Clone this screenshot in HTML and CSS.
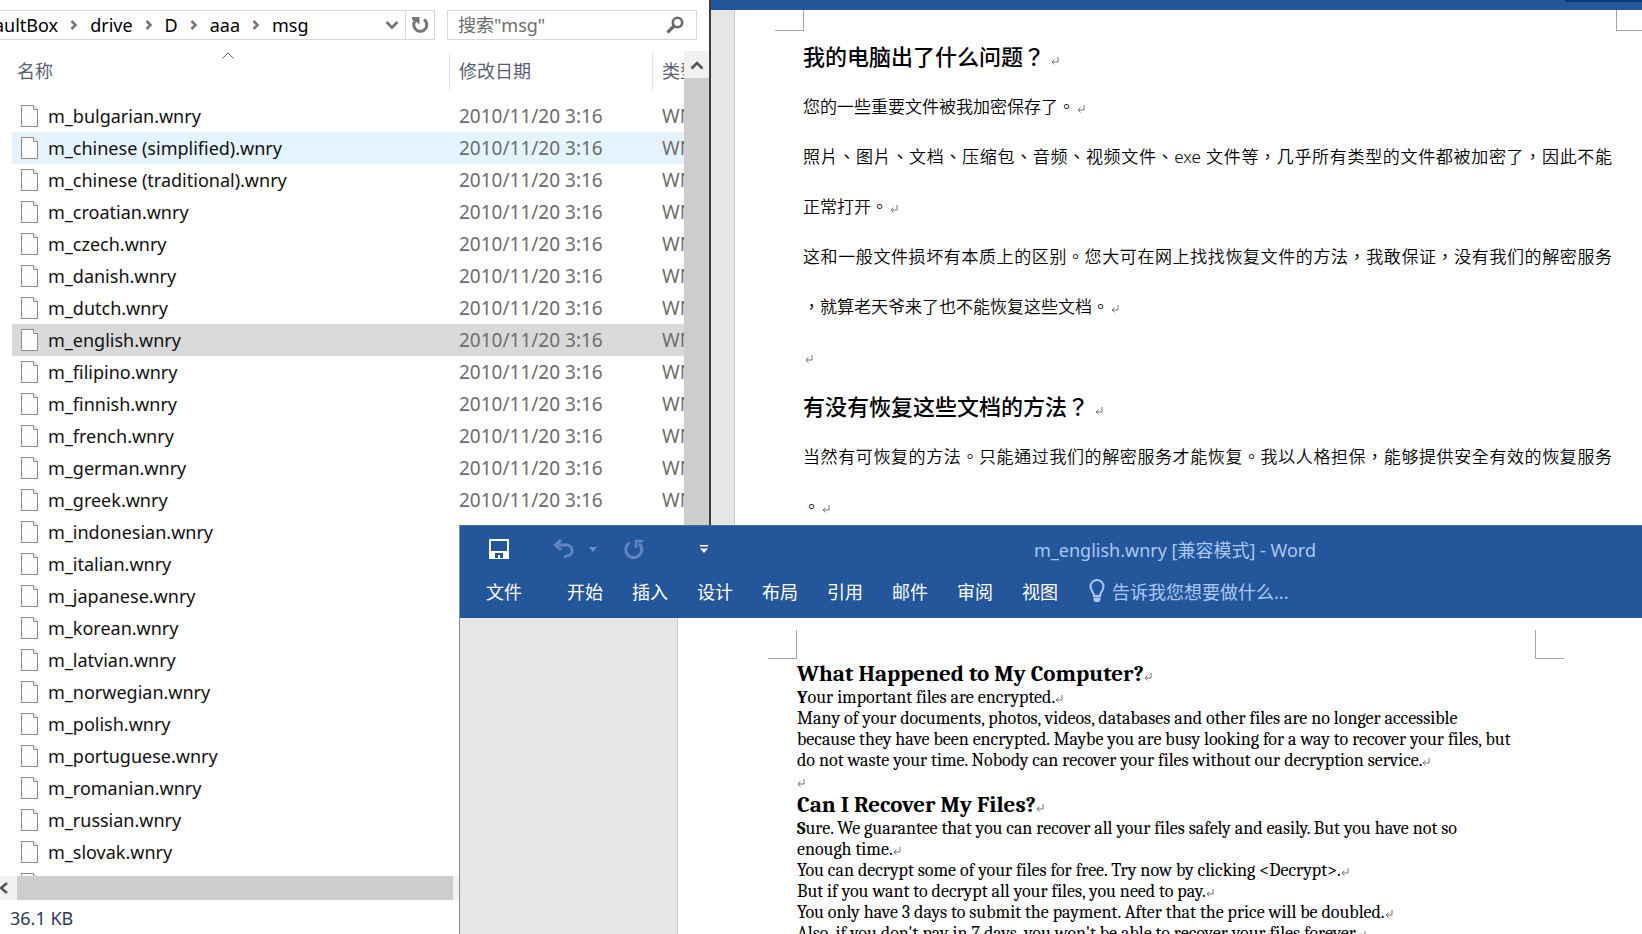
FILE: index.html
```html
<!DOCTYPE html>
<html lang="zh-CN">
<head>
<meta charset="utf-8">
<title>msg</title>
<link rel="stylesheet" href="styles.css">
</head>
<body>
<svg class="defs" aria-hidden="true">
  <symbol id="ret" viewBox="0 0 8 8"><path d="M7 0v5H1M3.500 2.500L1 5l2.500 2.500" fill="none" stroke="#777" stroke-width="1"/></symbol>
  <symbol id="file" viewBox="0 0 18 22"><path d="M.5.5h12l4 4v17H.5z" fill="#fdfcfd" stroke="#8b8b8b"/><path d="M12.500.5v4h4" fill="#fff" stroke="#8b8b8b"/></symbol>
  <symbol id="chev" viewBox="0 0 8 10"><path d="M1.500 1l4 4-4 4" fill="none" stroke="#777" stroke-width="2.600"/></symbol>
</svg>
<main class="desktop">

<section class="explorer" aria-label="msg">
  <div class="toolbar">
    <nav class="address">
      <button class="crumb">aultBox</button><svg class="chev"><use href="#chev"/></svg>
      <button class="crumb">drive</button><svg class="chev"><use href="#chev"/></svg>
      <button class="crumb">D</button><svg class="chev"><use href="#chev"/></svg>
      <button class="crumb">aaa</button><svg class="chev"><use href="#chev"/></svg>
      <button class="crumb">msg</button>
      <button class="drop" aria-label="展开"><svg width="14" height="10" viewBox="0 0 14 10"><path d="M1.500 2L7 7.500 12.500 2" fill="none" stroke="#777" stroke-width="2.800"/></svg></button>
      <button class="refresh" aria-label="刷新"><svg width="18" height="18" viewBox="0 0 18 18"><path d="M13 3.500A6.500 6.500 0 1 1 4 5" fill="none" stroke="#777" stroke-width="3"/><path d="M1 1h7.500v7.500L5.500 6 1 3.500z" fill="#777"/></svg></button>
    </nav>
    <label class="search">
      <input type="text" aria-label="搜索" placeholder='搜索"msg"'>
      <svg width="18" height="18" viewBox="0 0 18 18"><circle cx="11.500" cy="6.500" r="4.700" fill="none" stroke="#6b6b6b" stroke-width="2.600"/><path d="M8 10l-6.500 6.500" stroke="#6b6b6b" stroke-width="3.200"/></svg>
    </label>
  </div>
  <div class="content">
    <div class="list">
      <table>
        <colgroup><col class="c-name"><col class="c-date"><col class="c-type"></colgroup>
        <thead><tr>
          <th class="name"><div>名称</div><svg class="sort" width="12" height="7" viewBox="0 0 12 7"><path d="M.5 6.500L6 1l5.500 5.500" fill="none" stroke="#666"/></svg></th>
          <th><div>修改日期</div></th><th><div>类型</div></th>
        </tr></thead>
        <tbody id="files">
          <tr><td><span><svg><use href="#file"/></svg>m_bulgarian.wnry</span></td><td>2010/11/20 3:16</td><td>WNRY</td></tr>
          <tr class="hover"><td><span><svg><use href="#file"/></svg>m_chinese (simplified).wnry</span></td><td>2010/11/20 3:16</td><td>WNRY</td></tr>
          <tr><td><span><svg><use href="#file"/></svg>m_chinese (traditional).wnry</span></td><td>2010/11/20 3:16</td><td>WNRY</td></tr>
          <tr><td><span><svg><use href="#file"/></svg>m_croatian.wnry</span></td><td>2010/11/20 3:16</td><td>WNRY</td></tr>
          <tr><td><span><svg><use href="#file"/></svg>m_czech.wnry</span></td><td>2010/11/20 3:16</td><td>WNRY</td></tr>
          <tr><td><span><svg><use href="#file"/></svg>m_danish.wnry</span></td><td>2010/11/20 3:16</td><td>WNRY</td></tr>
          <tr><td><span><svg><use href="#file"/></svg>m_dutch.wnry</span></td><td>2010/11/20 3:16</td><td>WNRY</td></tr>
          <tr class="selected"><td><span><svg><use href="#file"/></svg>m_english.wnry</span></td><td>2010/11/20 3:16</td><td>WNRY</td></tr>
          <tr><td><span><svg><use href="#file"/></svg>m_filipino.wnry</span></td><td>2010/11/20 3:16</td><td>WNRY</td></tr>
          <tr><td><span><svg><use href="#file"/></svg>m_finnish.wnry</span></td><td>2010/11/20 3:16</td><td>WNRY</td></tr>
          <tr><td><span><svg><use href="#file"/></svg>m_french.wnry</span></td><td>2010/11/20 3:16</td><td>WNRY</td></tr>
          <tr><td><span><svg><use href="#file"/></svg>m_german.wnry</span></td><td>2010/11/20 3:16</td><td>WNRY</td></tr>
          <tr><td><span><svg><use href="#file"/></svg>m_greek.wnry</span></td><td>2010/11/20 3:16</td><td>WNRY</td></tr>
          <tr><td><span><svg><use href="#file"/></svg>m_indonesian.wnry</span></td><td></td><td></td></tr>
          <tr><td><span><svg><use href="#file"/></svg>m_italian.wnry</span></td><td></td><td></td></tr>
          <tr><td><span><svg><use href="#file"/></svg>m_japanese.wnry</span></td><td></td><td></td></tr>
          <tr><td><span><svg><use href="#file"/></svg>m_korean.wnry</span></td><td></td><td></td></tr>
          <tr><td><span><svg><use href="#file"/></svg>m_latvian.wnry</span></td><td></td><td></td></tr>
          <tr><td><span><svg><use href="#file"/></svg>m_norwegian.wnry</span></td><td></td><td></td></tr>
          <tr><td><span><svg><use href="#file"/></svg>m_polish.wnry</span></td><td></td><td></td></tr>
          <tr><td><span><svg><use href="#file"/></svg>m_portuguese.wnry</span></td><td></td><td></td></tr>
          <tr><td><span><svg><use href="#file"/></svg>m_romanian.wnry</span></td><td></td><td></td></tr>
          <tr><td><span><svg><use href="#file"/></svg>m_russian.wnry</span></td><td></td><td></td></tr>
          <tr><td><span><svg><use href="#file"/></svg>m_slovak.wnry</span></td><td></td><td></td></tr>
          <tr><td><span><svg><use href="#file"/></svg></span></td><td></td><td></td></tr>
        </tbody>
      </table>
    </div>
    <div class="vscroll"><button aria-label="向上"><svg width="14" height="10" viewBox="0 0 14 10"><path d="M1.500 8.500L7 3l5.500 5.500" fill="none" stroke="#555" stroke-width="2.600"/></svg></button><div class="thumb"></div></div>
  </div>
  <div class="hscroll"><button aria-label="向左"><svg width="9" height="12" viewBox="0 0 9 12"><path d="M7 1L1 6l6 5" fill="none" stroke="#555" stroke-width="2.600"/></svg></button><div class="thumb"></div></div>
  <footer class="status">36.1 KB</footer>
</section>

<section class="word word-cn" lang="zh-TW" aria-label="Word">
  <div class="titlestrip"><i></i></div>
  <div class="workspace">
    <article class="page">
      <div class="corners"><i class="cl"></i><i class="cr"></i></div>
      <h2>我的电脑出了什么问题？<svg class="ret"><use href="#ret"/></svg></h2>
      <p>您的一些重要文件被我加密保存了。<svg class="ret"><use href="#ret"/></svg></p>
      <p class="full">照片、图片、文档、压缩包、音频、视频文件、exe 文件等，几乎所有类型的文件都被加密了，因此不能</p>
      <p>正常打开。<svg class="ret"><use href="#ret"/></svg></p>
      <p class="full">这和一般文件损坏有本质上的区别。您大可在网上找找恢复文件的方法，我敢保证，没有我们的解密服务</p>
      <p>，就算老天爷来了也不能恢复这些文档。<svg class="ret"><use href="#ret"/></svg></p>
      <p><svg class="ret"><use href="#ret"/></svg></p>
      <h2>有没有恢复这些文档的方法？<svg class="ret"><use href="#ret"/></svg></h2>
      <p class="full">当然有可恢复的方法。只能通过我们的解密服务才能恢复。我以人格担保，能够提供安全有效的恢复服务</p>
      <p>。<svg class="ret"><use href="#ret"/></svg></p>
    </article>
  </div>
</section>

<section class="word word-en" aria-label="m_english.wnry - Word">
  <header class="ribbon">
    <div class="titlebar">
      <div class="quick">
        <button class="save" aria-label="保存"><svg width="20" height="20" viewBox="0 0 20 20"><path d="M1 1h18v18H1z" fill="none" stroke="#fff" stroke-width="2"/><path d="M1 12h18v7H1z" fill="#fff"/><path d="M6 14h8v5h-3v-3H9v3H6z" fill="#24569b"/></svg></button>
        <button class="undo" aria-label="撤消"><svg width="22" height="20" viewBox="0 0 22 20"><path d="M3 6h10a5.500 5.500 0 0 1 1 11l-3 1M8 1L2.500 6 8 11" fill="none" stroke="#5f84bf" stroke-width="3"/></svg></button>
        <button class="mini" aria-label="撤消选项"><svg width="8" height="5" viewBox="0 0 8 5"><path d="M0 0h8L4 5z" fill="#6f90c6"/></svg></button>
        <button class="redo" aria-label="重复"><svg width="20" height="20" viewBox="0 0 20 20"><path d="M6 3.500A8 8 0 1 0 15 4.500" fill="none" stroke="#5f84bf" stroke-width="3"/><path d="M19 2h-7v7" fill="none" stroke="#5f84bf" stroke-width="2.600"/></svg></button>
        <button class="custom" aria-label="自定义"><svg width="8" height="8" viewBox="0 0 8 8"><path d="M0 0h8v1.500H0zM0 3.500h8L4 8z" fill="#fff"/></svg></button>
      </div>
      <div class="title">m_english.wnry [兼容模式] - Word</div>
    </div>
    <nav class="tabs">
      <button class="filetab">文件</button><button>开始</button><button>插入</button><button>设计</button><button>布局</button><button>引用</button><button>邮件</button><button>审阅</button><button>视图</button>
      <button class="tell"><svg width="16" height="24" viewBox="0 0 16 24"><path d="M5 17c0-4-3.500-5-3.500-9.500a6.500 6.500 0 0 1 13 0C14.500 12 11 13 11 17z" fill="none" stroke="#a9c8f5" stroke-width="2"/><path d="M4.500 18.500h7v2.500L10 23H6l-1.500-2z" fill="#a9c8f5"/></svg>告诉我您想要做什么...</button>
    </nav>
  </header>
  <div class="workspace">
    <article class="page" lang="en">
      <div class="corners"><i class="cl"></i><i class="cr"></i></div>
      <h2>What Happened to My Computer?<svg class="ret"><use href="#ret"/></svg></h2>
      <p><b>Y</b>our important files are encrypted.<svg class="ret"><use href="#ret"/></svg></p>
      <p>Many of your documents, photos, videos, databases and other files are no longer accessible<br>because they have been encrypted. Maybe you are busy looking for a way to recover your files, but<br>do not waste your time. Nobody can recover your files without our decryption service.<svg class="ret"><use href="#ret"/></svg></p>
      <p><svg class="ret"><use href="#ret"/></svg></p>
      <h2>Can I Recover My Files?<svg class="ret"><use href="#ret"/></svg></h2>
      <p><b>S</b>ure. We guarantee that you can recover all your files safely and easily. But you have not so<br>enough time.<svg class="ret"><use href="#ret"/></svg></p>
      <p>You can decrypt some of your files for free. Try now by clicking &lt;Decrypt&gt;.<svg class="ret"><use href="#ret"/></svg></p>
      <p>But if you want to decrypt all your files, you need to pay.<svg class="ret"><use href="#ret"/></svg></p>
      <p>You only have 3 days to submit the payment. After that the price will be doubled.<svg class="ret"><use href="#ret"/></svg></p>
      <p>Also, if you don't pay in 7 days, you won't be able to recover your files forever.<svg class="ret"><use href="#ret"/></svg></p>
    </article>
  </div>
</section>
</main>
</body>
</html>
```
FILE: styles.css
```css
* { box-sizing: border-box; }
body { margin: 0; background: #fff; color: #000; font-family: "Noto Sans", "Noto Sans CJK SC", sans-serif; font-size: 18px; }
button { border: 0; padding: 0; background: none; font: inherit; color: inherit; display: flex; align-items: center; white-space: nowrap; }
h2, p { margin: 0; }
.defs { position: absolute; width: 0; height: 0; }
.desktop { position: relative; height: 100vh; overflow: hidden; }

/* Explorer window */
.explorer { position: absolute; left: 0; top: 0; bottom: 0; width: 711px; display: flex; flex-direction: column; border-right: 2px solid #3c3c3c; background: #fff; }
.toolbar { display: flex; gap: 12px; padding: 10px 12px 11px 0; }
.address { flex: 1; display: flex; align-items: center; height: 30px; border: 1px solid #d9d9d9; border-left: 0; }
.crumb { height: 28px; }
.crumb:first-child { margin-left: -6px; }
.address .chev { width: 8px; height: 10px; margin: 0 12px; flex: none; }
.drop { margin-left: auto; padding: 0 6px; height: 28px; }
.refresh { height: 28px; padding: 0 5px; border-left: 1px solid #d9d9d9; }
.search { width: 250px; height: 30px; display: flex; align-items: center; border: 1px solid #d9d9d9; padding: 0 12px 0 10px; }
.search input { flex: 1; min-width: 0; border: 0; outline: 0; padding: 0; font: inherit; background: none; }
.search input::placeholder { color: #6d6d6d; opacity: 1; }
.content { flex: 1; min-height: 0; display: flex; }
.list { flex: 1; min-width: 0; overflow: hidden; padding-left: 12px; }
table { width: 100%; table-layout: fixed; border-collapse: collapse; }
.c-name { width: 438px; }
.c-date { width: 203px; }
th { position: relative; padding: 0 0 9px; font-weight: 400; text-align: left; color: #5a6070; }
th div { height: 40px; line-height: 41px; padding-left: 9px; border-right: 1px solid #e5e5e5; overflow: hidden; white-space: nowrap; }
th:last-child div { border: 0; }
th.name div { padding-left: 5px; }
.sort { position: absolute; top: 1px; left: 210px; }
td { height: 32px; padding: 0 0 0 9px; font-size: 19px; line-height: 32px; color: #6d6d6d; white-space: nowrap; overflow: hidden; }
td:first-child { font-size: 18px; color: #111; }
td span { display: flex; align-items: center; gap: 9px; height: 32px; }
td svg { width: 18px; height: 22px; flex: none; }
.hover { background: #e5f3ff; }
.selected { background: #d9d9d9; }
.vscroll { width: 25px; display: flex; flex-direction: column; }
.vscroll button { height: 27px; justify-content: center; background: #f1f1f1; }
.vscroll .thumb { flex: 1; background: #cdcdcd; }
.hscroll { display: flex; height: 24px; background: #f1f1f1; }
.hscroll button { width: 17px; }
.hscroll .thumb { width: 436px; background: #cdcdcd; }
.status { height: 34px; line-height: 36px; padding-left: 10px; color: #2b3b5b; }

/* Word windows */
.word { position: absolute; right: 0; bottom: 0; display: flex; flex-direction: column; background: #e6e6e6; overflow: hidden; }
.word-cn { left: 711px; top: 0; }
.word-en { left: 459px; top: 525px; border-left: 1px solid #8a8a8a; border-top: 1px solid #4a6a96; }
.titlestrip { height: 10px; background: #24569b; display: flex; justify-content: flex-end; }
.titlestrip i { width: 77px; height: 2px; background: #063a80; }
.workspace { flex: 1; min-height: 0; display: flex; }
.page { flex: 1; background: #fff; border-left: 1px solid #c8c8c8; }
.ret { width: 8px; height: 8px; }
.corners { display: flex; justify-content: space-between; }
.corners i { width: 29px; border-bottom: 1px solid #a5a5a5; }
.cl { border-right: 1px solid #a5a5a5; }
.cr { border-left: 1px solid #a5a5a5; }

.word-cn .page { margin-left: 23px; padding-left: 68px; padding-right: 30px; font-family: "Noto Sans", "Noto Sans CJK TC", sans-serif; font-size: 17px; font-weight: 350; line-height: 50px; }
.word-cn .corners { height: 21px; margin: 0 -30px 1px -28px; }
.word-cn .corners .cr { width: 26px; }
.word-cn h2 { font-size: 22px; line-height: 46px; height: 50px; font-weight: 500; font-family: "Noto Sans CJK TC", sans-serif; }
.word-cn h2 .ret { margin-left: 6px; }
.word-cn p { height: 50px; white-space: nowrap; }
.word-cn p .ret { margin-left: 2px; }
.word-cn .full { text-align: justify; text-align-last: justify; }

.ribbon { height: 92px; background: #24569b; color: #fff; }
.titlebar { display: flex; align-items: center; height: 46px; padding-left: 29px; }
.quick { display: flex; align-items: center; width: 545px; }
.undo { margin-left: 44px; }
.mini { margin-left: 14px; }
.redo { margin-left: 27px; }
.custom { margin-left: 56px; }
.title { color: #a9c8f5; }
.tabs { display: flex; align-items: center; gap: 29px; height: 38px; padding-left: 26px; }
.filetab { margin-right: 16px; }
.tell { gap: 7px; margin-left: 2px; color: #a9c8f5; }

.word-en .page { margin-left: 217px; padding-left: 119px; padding-right: 78px; padding-top: 12px; font-family: Cambria, Caladea, "Liberation Serif", serif; font-size: 18px; line-height: 21px; }
.word-en .corners { height: 29px; margin: 0 0 2px -29px; }
.word-en h2 { font-size: 23px; line-height: 26px; }
.word-en p { min-height: 21px; white-space: nowrap; }
```
